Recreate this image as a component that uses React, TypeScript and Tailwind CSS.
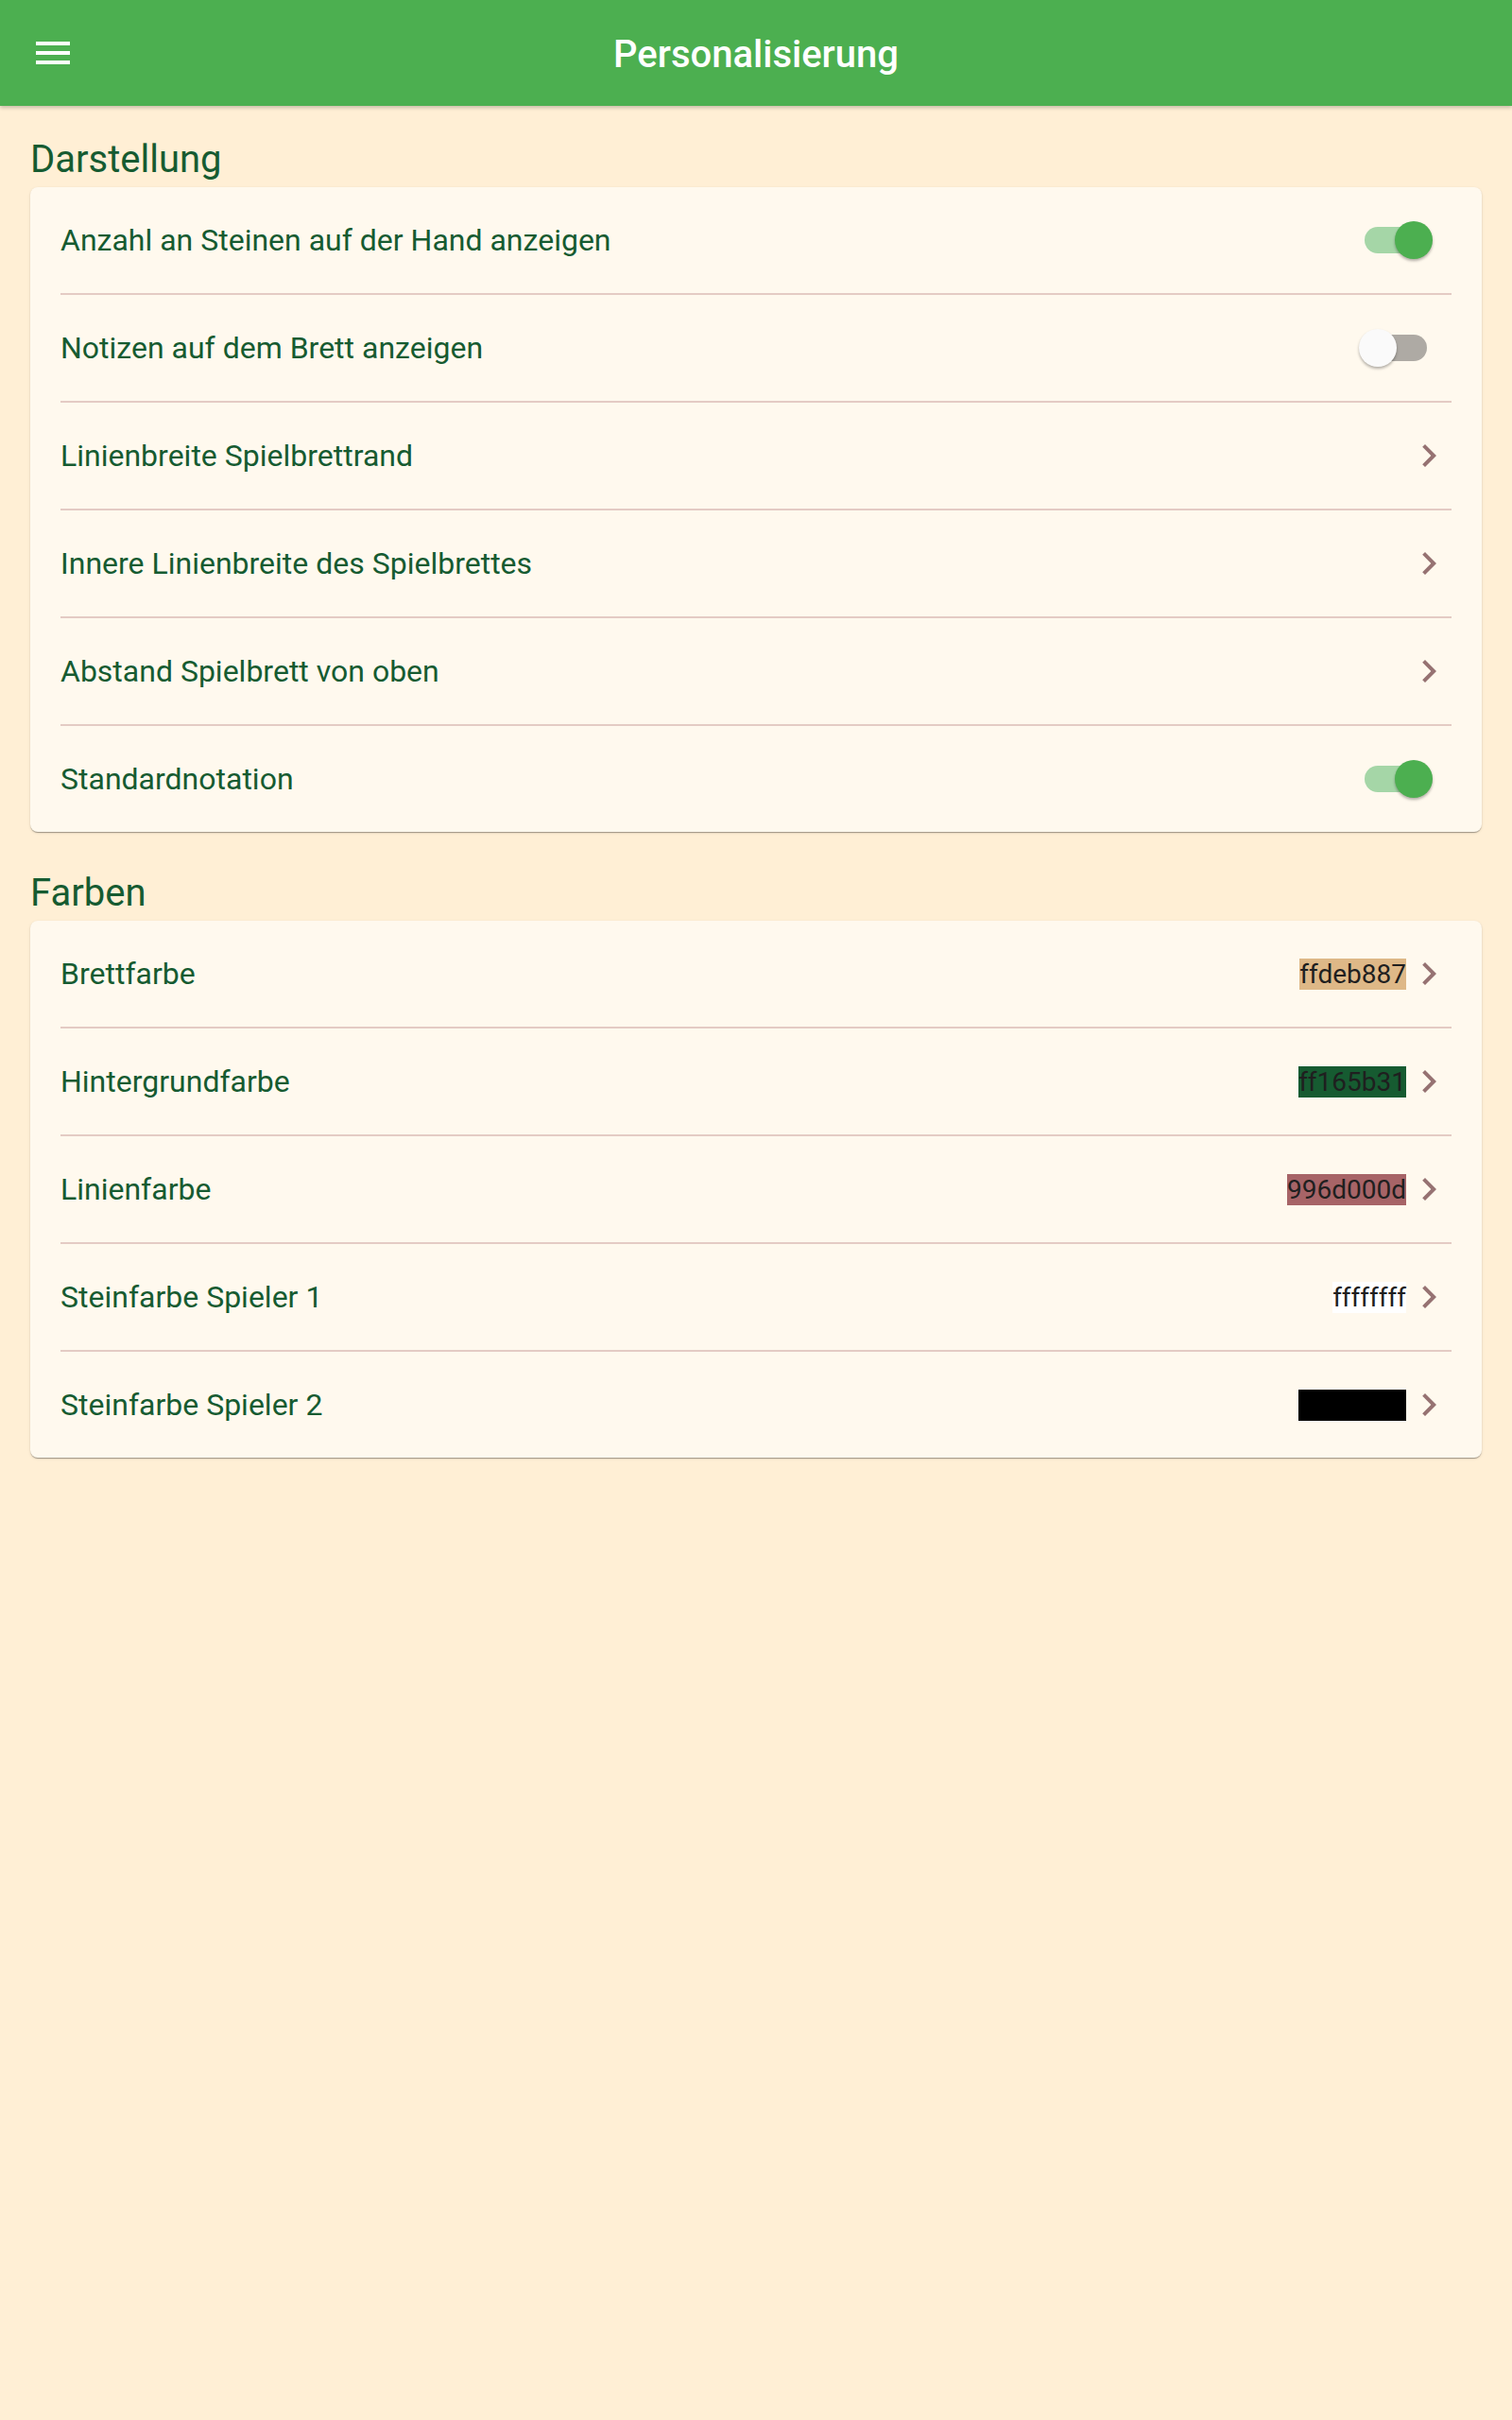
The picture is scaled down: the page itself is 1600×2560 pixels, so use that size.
import React from "react";

const TEXT = "text-[#165b31]";

function Chevron() {
  return (
    <svg width="48" height="48" viewBox="0 0 24 24" className="shrink-0">
      <path d="M8.59 16.59L13.17 12 8.59 7.41 10 6l6 6-6 6-1.41-1.41z" fill="#967272" />
    </svg>
  );
}

function Toggle({ on }: { on: boolean }) {
  return (
    <div className="relative w-[72px] h-10 mr-5 shrink-0">
      <div
        className={
          on
            ? "absolute left-0 top-[6px] w-[66px] h-[28px] rounded-full bg-[#a5d6a7]"
            : "absolute left-0 top-[6px] w-[66px] h-[28px] rounded-full bg-[#aeaaa4]"
        }
      />
      <div
        className={
          on
            ? "absolute left-[32px] top-0 w-10 h-10 rounded-full bg-[#4caf50] shadow-[0_2px_3px_rgba(0,0,0,0.3)]"
            : "absolute left-[-6px] top-0 w-10 h-10 rounded-full bg-[#fafafa] shadow-[0_2px_3px_rgba(0,0,0,0.3)]"
        }
      />
    </div>
  );
}

type Item = { label: string; kind: "toggle" | "nav" | "color"; on?: boolean; value?: string; bg?: string };

function Row({ item }: { item: Item }) {
  return (
    <div className="h-[112px] flex items-center justify-between">
      <span className={`text-[32px] ${TEXT}`}>{item.label}</span>
      {item.kind === "toggle" && <Toggle on={!!item.on} />}
      {item.kind === "nav" && <Chevron />}
      {item.kind === "color" && (
        <div className="flex items-center">
          <span
            className="text-[28px] leading-[33px] text-[#1f1f1f]"
            style={{ backgroundColor: item.bg, color: item.value === "ff000000" ? "#000" : undefined }}
          >
            {item.value}
          </span>
          <Chevron />
        </div>
      )}
    </div>
  );
}

function Card({ items }: { items: Item[] }) {
  return (
    <div className="mx-8 rounded-lg bg-[#fff9ee] px-8 shadow-[0_2px_1px_-1px_rgba(0,0,0,0.2),0_1px_1px_0_rgba(0,0,0,0.14),0_1px_3px_0_rgba(0,0,0,0.12)]">
      {items.map((it, i) => (
        <React.Fragment key={it.label}>
          {i > 0 && <div className="h-[2px] bg-[#e4cbc4]" />}
          <Row item={it} />
        </React.Fragment>
      ))}
    </div>
  );
}

export default function App() {
  const darstellung: Item[] = [
    { label: "Anzahl an Steinen auf der Hand anzeigen", kind: "toggle", on: true },
    { label: "Notizen auf dem Brett anzeigen", kind: "toggle", on: false },
    { label: "Linienbreite Spielbrettrand", kind: "nav" },
    { label: "Innere Linienbreite des Spielbrettes", kind: "nav" },
    { label: "Abstand Spielbrett von oben", kind: "nav" },
    { label: "Standardnotation", kind: "toggle", on: true },
  ];
  const farben: Item[] = [
    { label: "Brettfarbe", kind: "color", value: "ffdeb887", bg: "#deb887" },
    { label: "Hintergrundfarbe", kind: "color", value: "ff165b31", bg: "#165b31" },
    { label: "Linienfarbe", kind: "color", value: "996d000d", bg: "rgba(109,0,13,0.6)" },
    { label: "Steinfarbe Spieler 1", kind: "color", value: "ffffffff", bg: "#ffffff" },
    { label: "Steinfarbe Spieler 2", kind: "color", value: "ff000000", bg: "#000000" },
  ];
  return (
    <div className="min-h-[2560px] bg-[#ffefd5] font-['Roboto',sans-serif]">
      <header className="h-[112px] bg-[#4caf50] grid grid-cols-[1fr_auto_1fr] items-center shadow-[0_2px_4px_rgba(0,0,0,0.22)] relative z-10">
        <div className="pl-8 flex items-center">
          <svg width="48" height="48" viewBox="0 0 24 24">
            <path d="M3 18h18v-2H3v2zm0-5h18v-2H3v2zm0-7v2h18V6H3z" fill="#ffffff" />
          </svg>
        </div>
        <h1 className="text-[40px] font-medium text-white pt-[3px]">Personalisierung</h1>
        <div />
      </header>
      <h2 className={`mx-8 mt-[33px] mb-[6px] text-[40px] leading-[47px] ${TEXT}`}>Darstellung</h2>
      <Card items={darstellung} />
      <h2 className={`mx-8 mt-[41px] mb-[6px] text-[40px] leading-[47px] ${TEXT}`}>Farben</h2>
      <Card items={farben} />
    </div>
  );
}
